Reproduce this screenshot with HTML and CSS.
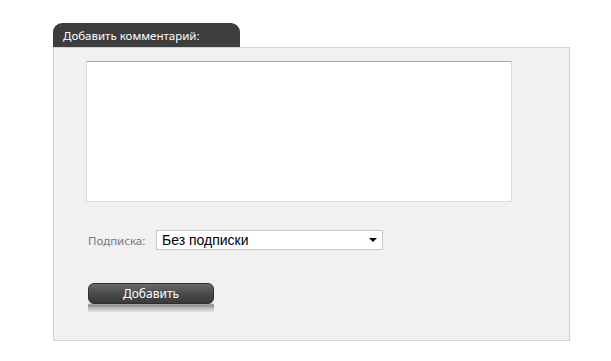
FILE: index.html
```html
<!DOCTYPE html>
<html lang="ru">
<head>
  <meta charset="UTF-8" />
  <title>Добавить комментарий</title>
  <link rel="stylesheet" href="styles.css">
</head>
<body>
  <div class="comment-box">
    <div class="tab">Добавить комментарий:</div>
    <div class="panel">
      <textarea class="comment-text"></textarea>
      <div class="row">
        <label class="label" for="sub">Подписка:</label>
        <div class="select" id="sub">
          <span>Без подписки</span>
          <span class="arrow"></span>
        </div>
      </div>
      <div class="btn-wrap">
        <button class="btn">Добавить</button>
      </div>
    </div>
  </div>
</body>
</html>
```

FILE: styles.css
```css
body {
  margin: 0;
  background: #fff;
  font-family: "Noto Sans", Tahoma, sans-serif;
}
.comment-box {
  padding: 23px 0 0 53px;
  width: 517px;
}
.tab {
  display: inline-block;
  width: 177px;
  height: 24px;
  line-height: 25px;
  padding-left: 10px;
  background: #3d3d3d;
  color: #fff;
  font-size: 11.5px;
  border-radius: 9px 9px 0 0;
  vertical-align: top;
}
.panel {
  background: #f1f1f1;
  border: 1px solid #d2d2d2;
  height: 294px;
  padding: 13px 0 0 32px;
  box-sizing: border-box;
}
.comment-text {
  display: block;
  width: 426px;
  height: 141px;
  box-sizing: border-box;
  margin: 0;
  border: 1px solid #d6dce4;
  border-top-color: #a8a8a8;
  background: #fff;
  resize: none;
}
.row {
  display: flex;
  align-items: center;
  margin-top: 28px;
}
.label {
  width: 68px;
  padding-left: 2px;
  color: #777;
  font-size: 11.5px;
}
.select {
  width: 227px;
  height: 20px;
  box-sizing: border-box;
  border: 1px solid #c8c8c8;
  background: #fff;
  display: flex;
  align-items: center;
  justify-content: space-between;
  padding: 0 5px 0 5px;
  font-family: "Liberation Sans", Arial, sans-serif;
  font-size: 14px;
  color: #000;
}
.arrow {
  width: 0;
  height: 0;
  border-left: 4px solid transparent;
  border-right: 4px solid transparent;
  border-top: 4px solid #000;
}
.btn-wrap {
  margin-top: 33px;
  margin-left: 2px;
  width: 126px;
  height: 29px;
  background: linear-gradient(#f1f1f1 20px, #888 22px, #bbb 25px, #e4e4e4 29px);
}
.btn {
  display: block;
  width: 126px;
  height: 21px;
  padding: 0;
  border: 1px solid #2e2e2e;
  border-radius: 6px;
  background: linear-gradient(#6a6a6a, #4a4a4a 50%, #3a3a3a);
  color: #fff;
  font-family: "Noto Sans", Tahoma, sans-serif;
  font-size: 12px;
  line-height: 19px;
}
```
